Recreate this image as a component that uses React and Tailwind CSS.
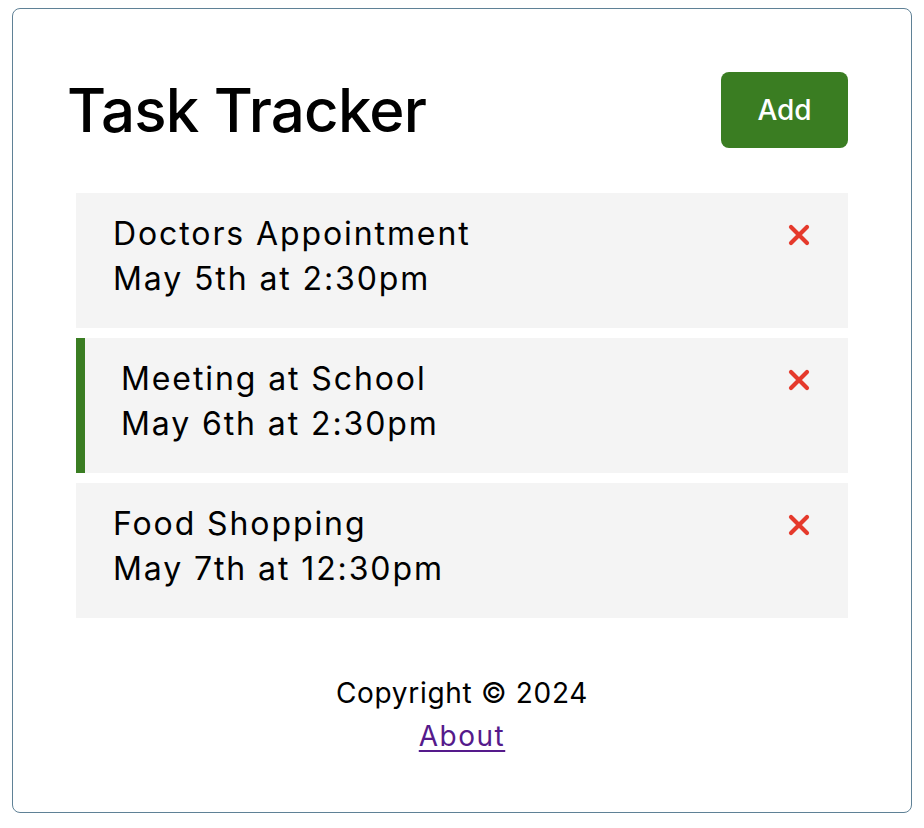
import React from "react";

const tasks = [
  { id: 1, text: "Doctors Appointment", day: "May 5th at 2:30pm", reminder: false },
  { id: 2, text: "Meeting at School", day: "May 6th at 2:30pm", reminder: true },
  { id: 3, text: "Food Shopping", day: "May 7th at 12:30pm", reminder: false },
];

function XIcon() {
  return (
    <svg width="22" height="22" viewBox="0 0 22 22" className="shrink-0">
      <path d="M3 3 L19 19 M19 3 L3 19" stroke="#e5392b" strokeWidth="4.2" strokeLinecap="round" fill="none" />
    </svg>
  );
}

function Task({ task }) {
  return (
    <div
      className={
        task.reminder
          ? "bg-[#f4f4f4] pt-[18px] pb-[27px] pl-[36px] pr-[38px] border-l-[9px] border-[#3a7d22]"
          : "bg-[#f4f4f4] pt-[18px] pb-[27px] pl-[37px] pr-[38px]"
      }
    >
      <div className="flex items-center justify-between h-[45px] leading-[45px] text-[32px] tracking-[1.9px]">
        <span>{task.text}</span>
        <span className="mt-[3px]"><XIcon /></span>
      </div>
      <div className="h-[45px] leading-[45px] text-[32px] tracking-[1.9px]">{task.day}</div>
    </div>
  );
}

export default function App() {
  return (
    <div
      className="min-h-[828px] bg-white text-black pt-[8px]"
      style={{ fontFamily: "Inter, 'Noto Sans', sans-serif" }}
    >
      <div className="mx-auto w-[900px] border border-[#5f8196] rounded-[8px] p-[54px]">
        <header className="flex items-center justify-between mb-[36px]">
          <h1 className="text-[60px] font-medium leading-[94px] tracking-[-0.8px]">Task Tracker</h1>
          <button className="m-[9px] w-[127px] h-[76px] rounded-[8px] bg-[#3a7d22] text-white text-[28px] font-medium">
            Add
          </button>
        </header>
        <div className="flex flex-col gap-[10px] mx-[9px]">
          {tasks.map((t) => (
            <Task key={t.id} task={t} />
          ))}
        </div>
        <footer className="mt-[54px] text-center text-[28px] leading-[43px] tracking-[0.7px]">
          <p>Copyright © 2024</p>
          <a href="#" className="text-[#551a8b] underline underline-offset-[4px] tracking-[1.5px]">About</a>
        </footer>
      </div>
    </div>
  );
}
